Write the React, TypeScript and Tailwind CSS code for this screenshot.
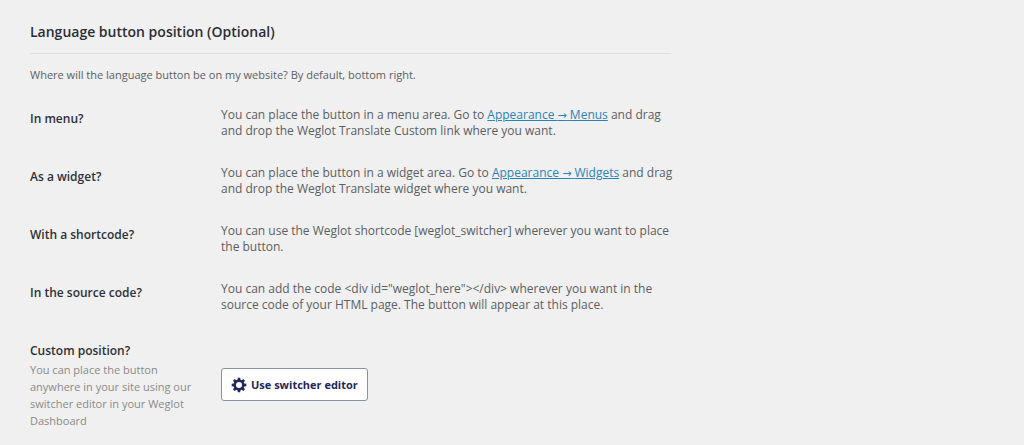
import type { ReactNode } from "react";

function GearIcon() {
  return (
    <svg viewBox="0 0 16 16" className="size-4 shrink-0" aria-hidden="true">
      <g fill="#23265a">
        {[0, 45, 90, 135, 180, 225, 270, 315].map((angle) => (
          <path key={angle} d="M6.3 4 L6.8 0.7 H9.2 L9.7 4 Z" transform={`rotate(${angle} 8 8)`} />
        ))}
      </g>
      <circle cx="8" cy="8" r="4.2" fill="none" stroke="#23265a" strokeWidth="2.4" />
    </svg>
  );
}

function Row({ title, hint, children }: { title: string; hint?: string; children: ReactNode }) {
  return (
    <div className="flex">
      <dt className="w-[191px] shrink-0 pt-1 pr-6">
        <span className="block text-[12px] leading-4 font-semibold text-[#2c3038]">{title}</span>
        {hint && <p className="mt-0.5 text-[11px] leading-[17px] text-[#8a8a8a]">{hint}</p>}
      </dt>
      <dd className="min-w-0 flex-1 text-[12px] leading-4 text-[#5b5e63]">{children}</dd>
    </div>
  );
}

function PathLink({ href, page }: { href: string; page: string }) {
  return (
    <a href={href} className="text-[#2a83b8] underline">
      Appearance <span className="font-['DejaVu_Sans',sans-serif] text-[11px] leading-none">→</span> {page}
    </a>
  );
}

export default function App() {
  return (
    <main className="min-h-screen bg-[#f0f0f0] px-[30px] pt-[21px] pb-4 font-['Open_Sans','Noto_Sans',sans-serif]">
      <section className="max-w-[641px]">
        <h2 className="text-[14px] leading-[22px] font-semibold text-[#2b2e34]">
          Language button position (Optional)
        </h2>
        <hr className="mt-[10px] border-[#dedfe0]" />
        <p className="mt-[13px] text-[11px] leading-4 text-[#5b5e63]">
          Where will the language button be on my website? By default, bottom right.
        </p>
        <dl className="mt-6 -mr-2 flex flex-col gap-[26px]">
          <Row title="In menu?">
            You can place the button in a menu area. Go to{" "}
            <PathLink href="#menus" page="Menus" /> and drag and drop the Weglot Translate Custom
            link where you want.
          </Row>
          <Row title="As a widget?">
            You can place the button in a widget area. Go to{" "}
            <PathLink href="#widgets" page="Widgets" /> and drag and drop the Weglot Translate
            widget where you want.
          </Row>
          <Row title="With a shortcode?">
            You can use the Weglot shortcode [weglot_switcher] wherever you want to place the button.
          </Row>
          <Row title="In the source code?">
            You can add the code &lt;div id="weglot_here"&gt;&lt;/div&gt; wherever you want in the
            source code of your HTML page. The button will appear at this place.
          </Row>
          <Row
            title="Custom position?"
            hint="You can place the button anywhere in your site using our switcher editor in your Weglot Dashboard"
          >
            <button
              type="button"
              className="mt-[29px] flex h-[33px] items-center gap-1 rounded-[3px] border border-[#8793a0] bg-white px-[9px] text-[11px] font-bold text-[#23265a]"
            >
              <GearIcon />
              Use switcher editor
            </button>
          </Row>
        </dl>
      </section>
    </main>
  );
}
